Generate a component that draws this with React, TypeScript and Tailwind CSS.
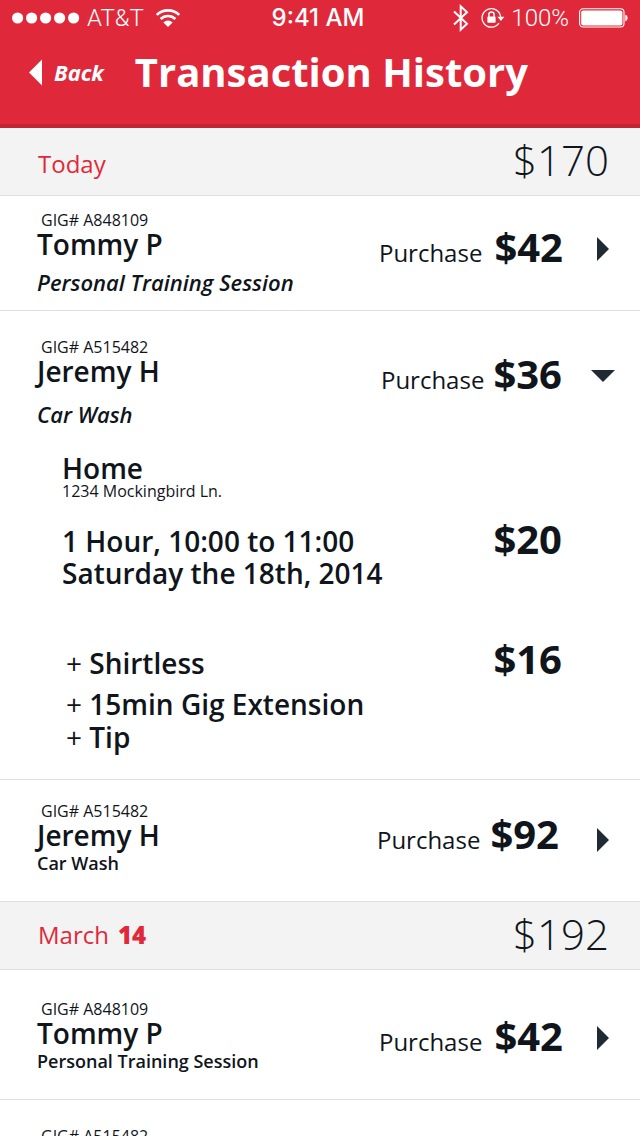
import { useState } from "react";

type Extra = { label: string; className: string };

type Transaction = {
  id: string;
  gig: string;
  name: string;
  service: string;
  amount: string;
  spacing: string;
  priceTop: string;
  priceSpacing: string;
  emphasised?: boolean;
  subtitleGap?: string;
  details?: {
    place: string;
    address: string;
    when: string[];
    base: string;
    extras: Extra[];
    extrasTotal: string;
  };
};

type Day = {
  id: string;
  label: string;
  day?: string;
  total: string;
  labelClass: string;
  items: Transaction[];
};

const days: Day[] = [
  {
    id: "today",
    label: "Today",
    total: "$170",
    labelClass: "pt-2",
    items: [
      {
        id: "t1",
        gig: "A848109",
        name: "Tommy P",
        service: "Personal Training Session",
        amount: "$42",
        spacing: "pt-3.5 pb-3.5",
        priceTop: "mt-[17px]",
        priceSpacing: "gap-3 pr-[22px]",
        emphasised: true,
        subtitleGap: "mt-2.5",
      },
      {
        id: "t2",
        gig: "A515482",
        name: "Jeremy H",
        service: "Car Wash",
        amount: "$36",
        spacing: "pt-[26px] pb-[26px]",
        priceTop: "mt-[17px]",
        priceSpacing: "gap-[9px] pr-[23px]",
        emphasised: true,
        subtitleGap: "mt-[15px]",
        details: {
          place: "Home",
          address: "1234 Mockingbird Ln.",
          when: ["1 Hour, 10:00 to 11:00", "Saturday the 18th, 2014"],
          base: "$20",
          extras: [
            { label: "Shirtless", className: "mb-[9px]" },
            { label: "15min Gig Extension", className: "mb-px" },
            { label: "Tip", className: "" },
          ],
          extrasTotal: "$16",
        },
      },
      {
        id: "t3",
        gig: "A515482",
        name: "Jeremy H",
        service: "Car Wash",
        amount: "$92",
        spacing: "pt-[21px] pb-6",
        priceTop: "mt-[13px]",
        priceSpacing: "gap-2.5 pr-[26px] pb-2",
      },
    ],
  },
  {
    id: "march-14",
    label: "March",
    day: "14",
    total: "$192",
    labelClass: "pt-0.5",
    items: [
      {
        id: "m1",
        gig: "A848109",
        name: "Tommy P",
        service: "Personal Training Session",
        amount: "$42",
        spacing: "pt-[29px] pb-6",
        priceTop: "mt-[17px]",
        priceSpacing: "gap-3 pr-[22px]",
      },
      {
        id: "m2",
        gig: "A515482",
        name: "Jeremy H",
        service: "Car Wash",
        amount: "$36",
        spacing: "pt-[26px] pb-6",
        priceTop: "mt-[17px]",
        priceSpacing: "gap-3 pr-[22px]",
      },
    ],
  },
];

function StatusBar() {
  return (
    <div className="grid h-9 grid-cols-[1fr_auto_1fr] items-center pr-3 pl-3 font-['Roboto',sans-serif] text-[24px] leading-7">
      <div className="flex items-center">
        <svg width="68" height="12" viewBox="0 0 68 12" fill="currentColor" aria-hidden="true">
          <circle cx="5.6" cy="6" r="5.6" />
          <circle cx="19.6" cy="6" r="5.6" />
          <circle cx="33.6" cy="6" r="5.6" />
          <circle cx="47.6" cy="6" r="5.6" />
          <circle cx="61.6" cy="6" r="5.6" />
        </svg>
        <span className="ml-[7px] font-light">AT&amp;T</span>
        <svg className="ml-[11px]" width="26" height="20" viewBox="0 0 26 20" fill="none" stroke="currentColor" aria-hidden="true">
          <path d="M1.8 6.9a16 16 0 0 1 22.4 0" strokeWidth="2.6" />
          <path d="M5.6 11a10.6 10.6 0 0 1 14.8 0" strokeWidth="2.6" />
          <path d="M13 19l-4.6-4.6a6.6 6.6 0 0 1 9.2 0z" fill="currentColor" stroke="none" />
        </svg>
      </div>
      <span className="pr-1 font-['Inter',sans-serif] text-[24px] font-medium">9:41 AM</span>
      <div className="flex items-center justify-end">
        <svg width="16" height="28" viewBox="0 0 16 28" fill="none" stroke="currentColor" strokeWidth="2" aria-hidden="true">
          <path d="M1 7.5l13 12.3-6.3 5.9V2.3L14 8.2 1 20.5" />
        </svg>
        <svg className="ml-3" width="24" height="22" viewBox="0 0 24 22" fill="none" stroke="currentColor" aria-hidden="true">
          <path d="M19.6 9.8A9.3 9.3 0 1 0 18 16.2" strokeWidth="1.3" />
          <path d="M16.4 9.8h7L19.9 14z" fill="currentColor" stroke="none" />
          <rect x="6.4" y="9.6" width="8.2" height="6.2" rx="0.8" fill="currentColor" stroke="none" />
          <path d="M7.9 10V7.6a2.6 2.6 0 0 1 5.2 0V10" strokeWidth="1.4" />
        </svg>
        <span className="ml-1.5 font-light">100%</span>
        <svg className="ml-2.5" width="49" height="20" viewBox="0 0 49 20" fill="none" stroke="currentColor" aria-hidden="true">
          <rect x="0.6" y="0.8" width="44.4" height="18.2" rx="3.4" strokeWidth="1.1" />
          <rect x="2.2" y="2.4" width="41.2" height="15" rx="2" fill="currentColor" stroke="none" />
          <path d="M46.3 6.4a3.8 3.8 0 0 1 0 7z" fill="currentColor" stroke="none" />
        </svg>
      </div>
    </div>
  );
}

function Header() {
  return (
    <header className="shrink-0 border-b-4 border-[#c32432] bg-[#df293a] pb-4 text-white">
      <StatusBar />
      <div className="flex h-[72px] items-center pl-[29px]">
        <button type="button" className="flex items-center gap-3 text-[22px] leading-7 font-bold italic">
          <svg width="13" height="28" viewBox="0 0 13 28" fill="currentColor" aria-hidden="true">
            <path d="M13 1.5v26L0 14.5z" />
          </svg>
          Back
        </button>
        <h1 className="ml-[31px] text-[40px] leading-10 font-bold whitespace-nowrap">Transaction History</h1>
      </div>
    </header>
  );
}

function Arrow({ open }: { open: boolean }) {
  return (
    <svg width="24" height="24" viewBox="0 0 24 24" fill="#1f2a35" aria-hidden="true">
      {open ? <path d="M0 6h24L12 18z" /> : <path d="M6 0v24l12-12z" />}
    </svg>
  );
}

function Row({ item }: { item: Transaction }) {
  const [open, setOpen] = useState(Boolean(item.details));
  const { details } = item;
  return (
    <li className={`border-b border-[#dedfe0] ${item.spacing}`}>
      <button
        type="button"
        aria-expanded={open}
        onClick={() => setOpen(!open)}
        className="flex w-full items-start justify-between pr-[25px] pl-[37px] text-left"
      >
        <span className="flex flex-col">
          <span className="pl-1 text-base leading-5">GIG# {item.gig}</span>
          <span className="text-[28px] leading-7 font-semibold">{item.name}</span>
          <span
            className={
              item.emphasised
                ? `text-[22px] leading-7 font-semibold italic ${item.subtitleGap}`
                : "text-lg leading-7 font-semibold"
            }
          >
            {item.service}
          </span>
        </span>
        <span className={`flex items-center ${item.priceTop}`}>
          <span className={`flex items-baseline ${item.priceSpacing}`}>
            <span className="text-2xl leading-7">Purchase</span>
            <span className="text-[40px] leading-10 font-bold">{item.amount}</span>
          </span>
          <span className="mt-1 ml-1.5">
            <Arrow open={open} />
          </span>
        </span>
      </button>
      {open && details && (
        <div className="pr-[78px] pl-[62px] text-[28px] font-semibold">
          <div className="mt-[26px] leading-7">{details.place}</div>
          <div className="text-base leading-[18px] font-normal">{details.address}</div>
          <div className="mt-[25px] flex items-start justify-between">
            <div className="leading-8">
              {details.when.map((line) => (
                <div key={line}>{line}</div>
              ))}
            </div>
            <div className="text-[40px] leading-7 font-bold">{details.base}</div>
          </div>
          <div className="mt-[58px] flex items-baseline justify-between">
            <ul className="pl-1 leading-8">
              {details.extras.map((extra) => (
                <li key={extra.label} className={extra.className}>
                  <span className="font-normal">+</span> {extra.label}
                </li>
              ))}
            </ul>
            <div className="text-[40px] leading-6 font-bold">{details.extrasTotal}</div>
          </div>
        </div>
      )}
    </li>
  );
}

export default function App() {
  return (
    <div className="flex h-screen flex-col bg-white font-['Open_Sans',sans-serif] text-[#10151b]">
      <Header />
      <main className="min-h-0 flex-1 overflow-y-auto [scrollbar-width:none]">
        {days.map((day) => (
          <section key={day.id}>
            <div className="flex h-[68px] items-center justify-between border-b border-[#dedfe0] bg-[#f3f3f3] pr-[31px] pb-1 pl-[38px]">
              <h2 className={`text-2xl leading-8 text-[#df293a] ${day.labelClass}`}>
                {day.label}
                {day.day && <span className="ml-[9px] font-extrabold">{day.day}</span>}
              </h2>
              <span className="text-[42px] leading-10 font-light">{day.total}</span>
            </div>
            <ul>
              {day.items.map((item) => (
                <Row key={item.id} item={item} />
              ))}
            </ul>
          </section>
        ))}
      </main>
    </div>
  );
}
